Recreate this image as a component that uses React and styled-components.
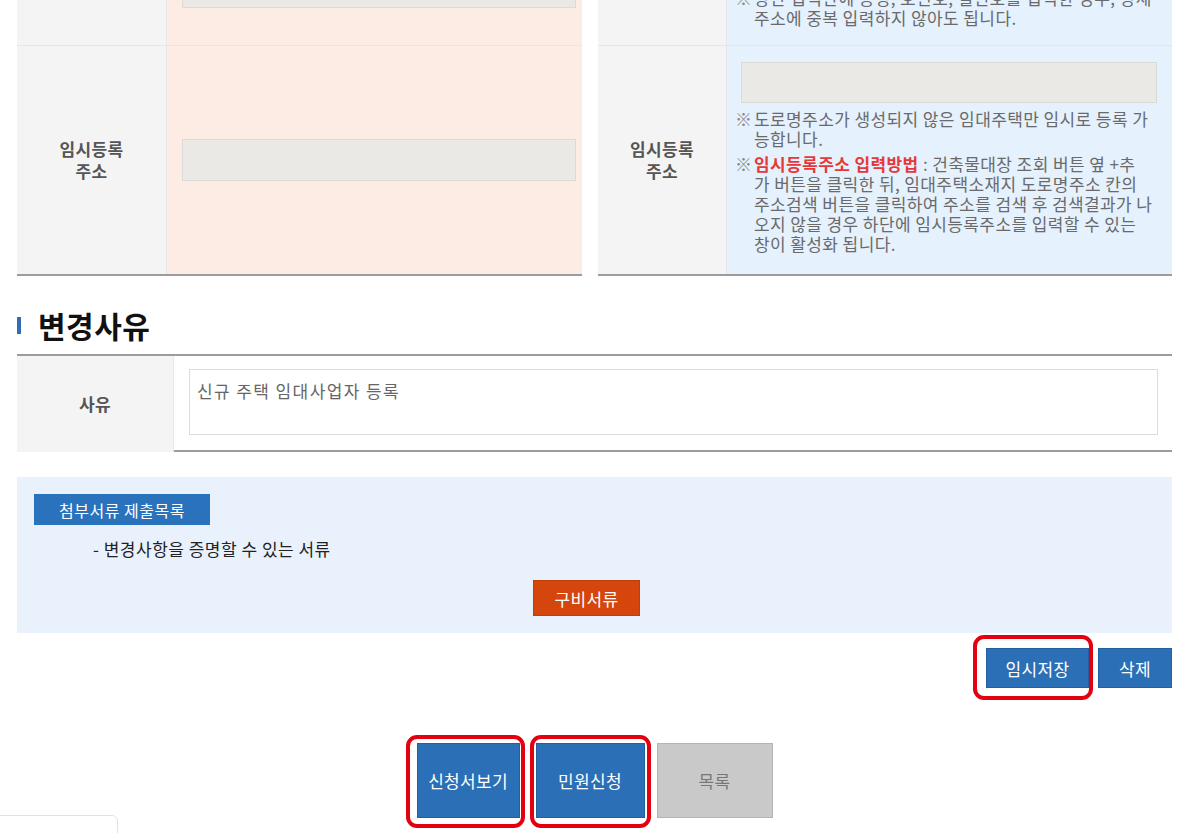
import styled, { createGlobalStyle } from "styled-components";

const GlobalStyle = createGlobalStyle`
  html {
    overflow: hidden;
  }
  body {
    margin: 0;
    padding: 0;
    background: #ffffff;
    font-family: "Noto Sans CJK KR", "Noto Sans", sans-serif;
    color: #333;
  }
`;

const Page = styled.div`
  /* page is scrolled: first row is partly above the viewport */
  margin-top: -72px;
  padding: 0 12px 40px 17px;
`;

const TopGrid = styled.div`
  display: grid;
  grid-template-columns: 565px 574px;
  gap: 16px;
`;

const FormTable = styled.div`
  border-bottom: 2px solid #9c9c9c;
`;

const Row = styled.div`
  display: grid;
  grid-template-columns: ${(p) => p.$labelW}px 1fr;
  height: ${(p) => p.$h}px;
  border-bottom: ${(p) => (p.$last ? "none" : "1px solid #e6e6e6")};
  box-sizing: border-box;
`;

const Label = styled.div`
  background: #f4f4f4;
  border-right: 1px solid #e8e8e8;
  display: flex;
  align-items: center;
  justify-content: center;
  text-align: center;
  font-size: 17px;
  line-height: 22px;
  letter-spacing: 0.3px;
  font-weight: 700;
  color: #555;
`;

const Value = styled.div`
  background: ${(p) => p.$tint};
  display: flex;
  flex-direction: column;
  justify-content: ${(p) => (p.$center ? "center" : "flex-start")};
  padding: ${(p) => p.$pad};
`;

const Field = styled.div`
  height: ${(p) => p.$h}px;
  margin-left: ${(p) => p.$ml || 0}px;
  background: #ebe9e6;
  border: 1px solid #dcdad6;
  box-sizing: border-box;
`;

const Notes = styled.div`
  margin-top: 6px;
  display: flex;
  flex-direction: column;
  gap: 5px;
`;

const Note = styled.div`
  display: flex;
  font-size: 17px;
  line-height: 20px;
  letter-spacing: 0.4px;
  color: #6a6a6a;
  white-space: nowrap;
`;

const Mark = styled.span`
  flex: 0 0 19px;
  color: #8a8a8a;
  letter-spacing: 0;
`;

const Red = styled.b`
  color: #e53838;
  font-weight: 700;
`;

const SectionTitle = styled.h2`
  margin: 32px 0 12px;
  display: flex;
  align-items: center;
  gap: 17px;
  font-size: 30px;
  line-height: 34px;
  letter-spacing: 0.5px;
  font-weight: 700;
  color: #111;

  &::before {
    content: "";
    width: 4px;
    height: 17px;
    background: #2f6db5;
  }
`;

const ReasonTable = styled.div`
  border-top: 2px solid #9c9c9c;
  border-bottom: 2px solid #9c9c9c;
  display: grid;
  grid-template-columns: 157px 1fr;
  height: 98px;
  box-sizing: border-box;
`;

const ReasonValue = styled.div`
  padding: 13px 14px 17px 15px;
  display: flex;
`;

const TextBox = styled.textarea`
  flex: 1;
  resize: none;
  border: 1px solid #dcdcdc;
  padding: 10px 7px;
  font-family: inherit;
  font-size: 17px;
  line-height: 22px;
  letter-spacing: 1.4px;
  color: #666;
  outline: none;
`;

const AttachBox = styled.div`
  margin-top: 25px;
  background: #e8f1fc;
  padding: 17px;
  display: flex;
  flex-direction: column;
`;

const Tag = styled.div`
  align-self: flex-start;
  width: 176px;
  height: 31px;
  background: #2b72bd;
  color: #fff;
  font-size: 16px;
  letter-spacing: 0.5px;
  display: flex;
  align-items: center;
  justify-content: center;
`;

const DocItem = styled.div`
  margin: 14px 0 0 59px;
  font-size: 17px;
  line-height: 20px;
  letter-spacing: 0.5px;
  color: #222;
`;

const CenterRow = styled.div`
  margin-top: 21px;
  display: flex;
  justify-content: center;
  padding-right: 16px;
`;

const Button = styled.button`
  width: ${(p) => p.$w}px;
  height: ${(p) => p.$h}px;
  background: ${(p) => (p.$variant === "orange" ? "#d4460b" : p.$variant === "gray" ? "#c9c9c9" : "#2b6fb6")};
  border: 1px solid ${(p) => (p.$variant === "orange" ? "#c23d07" : p.$variant === "gray" ? "#b3b3b3" : "#23609f")};
  color: ${(p) => (p.$variant === "gray" ? "#777" : "#fff")};
  font-family: inherit;
  font-size: 17px;
  letter-spacing: 0.3px;
  padding: 0;
  cursor: pointer;
`;

const ActionRow = styled.div`
  margin-top: 15px;
  display: flex;
  justify-content: flex-end;
  gap: 9px;
`;

const BottomRow = styled.div`
  margin-top: 55px;
  display: flex;
  justify-content: center;
  align-items: flex-start;
  gap: 12px;
`;

const Highlight = styled.div`
  position: relative;
  display: flex;
  margin-left: ${(p) => p.$ml || 0}px;

  &::after {
    content: "";
    position: absolute;
    top: ${(p) => p.$t}px;
    left: ${(p) => p.$l}px;
    right: ${(p) => p.$r}px;
    bottom: ${(p) => p.$b}px;
    border: 4px solid #e3000f;
    border-radius: 11px;
    pointer-events: none;
  }
`;

const FloatBox = styled.div`
  position: fixed;
  left: -10px;
  bottom: -24px;
  width: 126px;
  height: 40px;
  border: 1px solid #e2e2e2;
  border-radius: 6px;
  background: #fff;
`;

const PEACH = "#fdece4";
const SKY = "#e5f1fd";

export default function App() {
  return (
    <>
      <GlobalStyle />
      <Page>
        <TopGrid>
          <FormTable>
            <Row $labelW={150} $h={118}>
              <Label />
              <Value $tint={PEACH} $center $pad="0 6px 0 15px">
                <Field $h={42} />
              </Value>
            </Row>
            <Row $labelW={150} $h={228} $last>
              <Label>
                임시등록
                <br />
                주소
              </Label>
              <Value $tint={PEACH} $center $pad="0 6px 0 15px">
                <Field $h={42} />
              </Value>
            </Row>
          </FormTable>

          <FormTable>
            <Row $labelW={129} $h={118}>
              <Label />
              <Value $tint={SKY} $pad="13px 15px 0 8px">
                <Field $h={41} $ml={6} />
                <Notes>
                  <Note>
                    <Mark>※</Mark>
                    <span>
                      상단 입력란에 동명, 호번호, 실번호를 입력한 경우, 상세
                      <br />
                      주소에 중복 입력하지 않아도 됩니다.
                    </span>
                  </Note>
                </Notes>
              </Value>
            </Row>
            <Row $labelW={129} $h={228} $last>
              <Label>
                임시등록
                <br />
                주소
              </Label>
              <Value $tint={SKY} $pad="16px 15px 0 8px">
                <Field $h={41} $ml={6} />
                <Notes>
                  <Note>
                    <Mark>※</Mark>
                    <span>
                      도로명주소가 생성되지 않은 임대주택만 임시로 등록 가
                      <br />
                      능합니다.
                    </span>
                  </Note>
                  <Note>
                    <Mark>※</Mark>
                    <span>
                      <Red>임시등록주소 입력방법</Red> : 건축물대장 조회 버튼 옆 +추
                      <br />
                      가 버튼을 클릭한 뒤, 임대주택소재지 도로명주소 칸의
                      <br />
                      주소검색 버튼을 클릭하여 주소를 검색 후 검색결과가 나
                      <br />
                      오지 않을 경우 하단에 임시등록주소를 입력할 수 있는
                      <br />
                      창이 활성화 됩니다.
                    </span>
                  </Note>
                </Notes>
              </Value>
            </Row>
          </FormTable>
        </TopGrid>

        <SectionTitle>변경사유</SectionTitle>
        <ReasonTable>
          <Label>사유</Label>
          <ReasonValue>
            <TextBox readOnly value="신규 주택 임대사업자 등록" />
          </ReasonValue>
        </ReasonTable>

        <AttachBox>
          <Tag>첨부서류 제출목록</Tag>
          <DocItem>- 변경사항을 증명할 수 있는 서류</DocItem>
          <CenterRow>
            <Button $variant="orange" $w={107} $h={36}>
              구비서류
            </Button>
          </CenterRow>
        </AttachBox>

        <ActionRow>
          <Highlight $t={-13} $l={-13} $r={-4} $b={-12}>
            <Button $w={103} $h={40}>임시저장</Button>
          </Highlight>
          <Button $w={74} $h={40}>삭제</Button>
        </ActionRow>

        <BottomRow>
          <Highlight $t={-8} $l={-11} $r={-5} $b={-10}>
            <Button $w={103} $h={75}>신청서보기</Button>
          </Highlight>
          <Highlight $t={-8} $l={-6} $r={-6} $b={-10} $ml={4}>
            <Button $w={109} $h={75}>민원신청</Button>
          </Highlight>
          <Button $variant="gray" $w={116} $h={75}>
            목록
          </Button>
        </BottomRow>
      </Page>
      <FloatBox />
    </>
  );
}
